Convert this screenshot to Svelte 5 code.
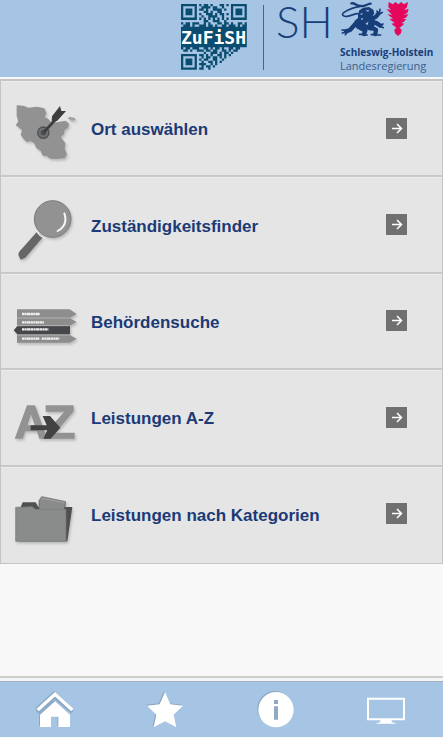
<script lang="ts">
  const entries = [
    { icon: 'map', label: 'Ort auswählen', href: '#ort', view: '3 15 270 288' },
    { icon: 'search', label: 'Zuständigkeitsfinder', href: '#zustaendigkeit', view: '3 -8 270 288' },
    { icon: 'signs', label: 'Behördensuche', href: '#behoerden', view: '3 -18 270 288' },
    { icon: 'az', label: 'Leistungen A-Z', href: '#leistungen', view: '3 -28 270 288' },
    { icon: 'folder', label: 'Leistungen nach Kategorien', href: '#kategorien', view: '3 -9 270 288' },
  ];

  const qr = [
    '#######.#.##.#...##.#.#######',
    '#.....#..####.##..#...#.....#',
    '#.###.#.##.#..####.#..#.###.#',
    '#.###.#...##.#..##....#.###.#',
    '#.###.#.#..###.#.##.#.#.###.#',
    '#.....#..#..####..#...#.....#',
    '#######.#.#.#.#.#.#.#.#######',
    '..........##..###..#.........',
    '#.##.###..#.#...##.##.#..##.#',
    '.###.#..###.##.#..##.###.#.##',
    '#############################',
    '#############################',
    '#############################',
    '#############################',
    '#############################',
    '#############################',
    '#############################',
    '#############################',
    '#############################',
    '#.##.###..##.#.##.#..##.##...',
    '.##.#..###.##.##..##.#.##....',
    '..........#..###.#.##.#......',
    '#######.##.#.#..##.#.#.......',
    '#.....#..#.##.##.#.#.........',
    '#.###.#.#.##..##..#..........',
    '#.###.#..#..##.#.#...........',
    '#.###.#.###..#.#.............',
    '#.....#..#.##.#..............',
    '#######.##..#................',
  ];
  const qrPath = qr
    .map((row, y) => [...row].map((c, x) => (c === '#' ? `M${x} ${y}h1v1h-1z` : '')).join(''))
    .join('');
</script>

<svelte:head><title>ZuFiSH</title></svelte:head>

<div class="page">
  <header>
    <svg class="qr" viewBox="0 0 66 66" role="img" aria-label="ZuFiSH">
      <path class="navy" d={qrPath} transform="scale(2.27)" />
      <text x="0" y="40">ZuFiSH</text>
    </svg>
    <div class="brand">
      <div class="marks">
        <span class="sh">SH</span>
        <svg class="crest" viewBox="0 0 216 120" aria-hidden="true">
          <g fill="none" stroke="#173e78" stroke-linecap="round" stroke-linejoin="round">
            <path stroke-width="7" d="M34 10c12-2 14 8 28 8M62 18c12 3 18-6 30-7" />
            <path stroke-width="5" d="M58 20c-16 2-32 8-46 17-9 6-3 14 9 12 14-2 22-8 33-8" />
            <path stroke-width="13" d="M94 53c9 3 14-1 21-12M96 66c10 1 17 4 25 11M46 72L30 90l-12 4M62 84l14 8-4 10M94 82l14 8-2 12" />
            <path stroke-width="5" d="M115 42l-4-9M118 40l2-12M119 42l8-5M120 77l9-5M122 79l8 4M20 91l-14-1M18 96L7 99M20 98l-4 6M70 103H58M72 105h10M106 103l-12 1M108 105h14" />
          </g>
          <path fill="#173e78" d="M54 44l4-13 12-8 17-2 13 8 3 11-5 8 7 14-2 17-8 13-13-3-10 3-20-5-12-13 4-12 10-8z" />
          <path fill="#a8c5e3" d="M76 32l11-3-2 6zM60 41l10-1-6 5zM62 56l8-2-4 7zM76 71l9-6-2 10z" />
          <path fill="#e4075b" d="M146 6l13 7 7-7 9 7 9-7 7 7 13-7-3 16-9 8 14-3-4 12-12 5 15-1-7 10-11 3 12 1-8 9-7 3 9 2-10 9-5 3 7 6-2 11-9 8-9-8-2-11 6-6-15-12 10-2-16-12 11-1-17-13 14 1-17-17 14 3-8-8z" />
        </svg>
      </div>
      <strong>Schleswig-Holstein</strong>
      <span class="gov">Landesregierung</span>
    </div>
  </header>

  <main>
    <ul>
      {#each entries as entry}
        <li>
          <a href={entry.href}>
            <svg class="icon" viewBox={entry.view} aria-hidden="true">
              {#if entry.icon === 'map'}
                <g class="shadow">
                  <path fill="#929292" d="M50 88l20 1 15 6 26-3 22 5 6 14-5 12 10 5 12 13 23-4 18-3 10 9-3 12-10 7-2 12-10 10 14 17-2 18 7 15-7 13-25 2-18-1-11-8-12-1-6-14-13-9-6-14-12-7-11 3-10-10-8-12 4-13-10-9-9-6 8-12-5-17z" />
                  <path fill="#a2a2a2" d="M202 127l9-5 13 4 3 6-12 2z" />
                </g>
                <circle cx="130" cy="170" r="17" fill="#6e7072" stroke="#505254" stroke-width="4" />
                <circle cx="130" cy="170" r="8" fill="#4c4e50" />
                <path fill="none" stroke="#3b3d3f" stroke-width="8" d="M132 168l42-45" />
                <path fill="#3b3d3f" d="M156 121l24-31 4 15 14 0-26 29-17 5z" />
              {:else if entry.icon === 'search'}
                <g class="shadow">
                  <path fill="#666" d="M111 153l18 16-53 62-14 6-7-14 2-9z" />
                  <circle cx="158" cy="115" r="55" fill="#929292" stroke="#7b7b7b" stroke-width="3" />
                </g>
                <path fill="none" stroke="#eee" stroke-width="4" d="M108 148q9 19 28 25" />
                <path fill="none" stroke="#f5f5f5" stroke-width="6" stroke-linecap="round" d="M193 98q12 35-20 53" />
              {:else if entry.icon === 'signs'}
                <g class="shadow">
                  <path fill="#8d8d8d" d="M51 88h158l21 14-21 12 21 12-21 11v28l21 11-21 12H51z" />
                  <path fill="#46474b" d="M52 138h158v25H52l-11-12z" />
                </g>
                <path stroke="#b2b2b2" stroke-width="3" d="M51 114h158M51 137h158M51 165h158" />
                <g fill="none" stroke="#eee" stroke-width="7" stroke-dasharray="8 1 5 1 10 1">
                  <path d="M66 102h54M66 127h66M66 148h79M66 176h53M125 176h53" />
                </g>
              {:else if entry.icon === 'az'}
                <g class="shadow" fill="#929292">
                  <path fill-rule="evenodd" d="M44 178l37-100h24l37 100h-24l-7-22H76l-8 22zM82 138h22l-11-33z" />
                  <path d="M137 78h84v18l-55 64h58v18h-88v-17l57-64h-56z" />
                </g>
                <path fill="#424242" d="M92 138h48l-12-28h22l31 35-29 33h-22l12-25H92z" />
              {:else}
                <g class="shadow">
                  <path fill="#505050" d="M61 114l7-17h39l8 14h102l-15 103H60z" />
                  <path fill="#8a8c8c" stroke="#555" stroke-width="2" d="M117 92l8-12 72 15-5 30-75-3z" />
                  <path fill="#8a8c8c" stroke="#777" stroke-width="2" d="M47 112l49-2 10 8h92v96H47z" />
                </g>
                <path fill="none" stroke="#b0b0b0" stroke-width="2" d="M124 84l70 14" />
              {/if}
            </svg>
            <span class="label">{entry.label}</span>
            <svg class="arrow" viewBox="0 0 21 21" aria-hidden="true">
              <path d="M6 10.500h9M11 6l4.500 4.500L11 15" />
            </svg>
          </a>
        </li>
      {/each}
    </ul>
  </main>

  <nav>
    <a href="#start" aria-label="Startseite">
      <svg viewBox="0 0 114 114">
        <path class="roof-shade" d="M5 64L57 19l52 45" />
        <path d="M57 31l45 40v37H67V77H45v31H12V71z" />
        <path class="roof" d="M5 57L57 10l52 47" />
      </svg>
    </a>
    <a href="#favoriten" aria-label="Favoriten">
      <svg viewBox="0 0 114 114">
        <path d="M57 3l16 37 38 4-28 27 8 38-34-18-34 18 8-38L3 44l38-4z" />
      </svg>
    </a>
    <a href="#info" aria-label="Information">
      <svg viewBox="0 0 114 114">
        <circle cx="57" cy="56" r="53" />
        <path class="hole" d="M51 27h12v12H51zM51 46h12v40H51z" />
      </svg>
    </a>
    <a href="#desktop" aria-label="Desktop-Ansicht">
      <svg class="flat" viewBox="0 0 114 114">
        <path fill-rule="evenodd" d="M0 20h114v68H0zM6 26v56h102V26z" />
        <path d="M40 87h34v6l16 5H26l14-5z" />
      </svg>
    </a>
  </nav>
</div>

<style>
  :global(body) { margin: 0; background: #f8f8f8; }
  .page {
    display: flex;
    flex-direction: column;
    min-height: 100vh;
    font-family: "Liberation Sans", Arial, sans-serif;
  }

  header {
    display: flex;
    justify-content: flex-end;
    height: 77px;
    padding-right: 6px;
    background: #a6c4e3;
    border-bottom: 2px solid #f4f8fb;
  }
  .navy { fill: #0b4d71; }
  .qr { width: 66px; height: 66px; margin: 4px 16px 0 0; }
  .qr text {
    fill: #fff;
    font: bold 18px "DejaVu Sans Mono", monospace;
  }
  .brand {
    display: grid;
    grid-template-columns: 64px 97px;
    align-content: start;
    padding-left: 13px;
    color: #173e78;
    background: linear-gradient(#3f6794, #3f6794) 0 5px / 1px 65px no-repeat;
  }
  .marks { display: flex; grid-column: 1 / 3; height: 45px; }
  .sh { width: 64px; font: 300 44px/42px Lato, sans-serif; }
  .crest { width: 72px; height: 40px; }
  strong, .gov {
    grid-column: 2;
    font: bold 10px/14px "Open Sans", sans-serif;
    white-space: nowrap;
  }
  .gov { font-size: 11px; font-weight: normal; color: #3b5f8c; }

  main { flex: 1; background: #f8f8f8; }
  ul {
    display: grid;
    grid-auto-rows: 1fr;
    min-height: 482px;
    margin: 0;
    padding: 0;
    list-style: none;
    background: #e5e5e5;
    border: 1px solid #c4c4c4;
    border-top-width: 2px;
  }
  li { display: flex; box-shadow: inset 0 -2px #c9c9c9, inset 0 1px #ededed; }
  li:last-child { box-shadow: inset 0 1px #ededed; }
  li a {
    display: flex;
    flex: 1;
    align-items: center;
    padding-right: 35px;
    color: #1b3a76;
    text-decoration: none;
  }
  .icon { width: 90px; height: 96px; }
  .shadow { filter: drop-shadow(4px 6px 3px #bbb); }
  .label { flex: 1; padding-top: 2px; font-size: 17px; line-height: 20px; font-weight: bold; }
  .arrow { width: 21px; height: 21px; margin-bottom: 2px; background: #707070; }
  .arrow path { fill: none; stroke: #fff; stroke-width: 1.500; }

  nav {
    display: grid;
    grid-template-columns: repeat(4, 1fr);
    height: 55px;
    margin-bottom: 1px;
    padding-right: 2px;
    background: #a6c4e3;
    border-top: 1px solid #a5b1bd;
    box-shadow: 0 -3px #f1f5f8, 0 -5px #cfcfca;
  }
  nav a { display: grid; place-items: center; }
  nav svg {
    width: 38px;
    height: 38px;
    fill: #fff;
    filter: drop-shadow(-1px -1px 0 #8ba7c3);
  }
  nav .flat { filter: none; }
  .roof, .roof-shade { fill: none; stroke: #fff; stroke-width: 10; }
  .roof-shade { stroke: #8ba7c3; }
  .hole { fill: #8fa9c4; }
</style>
